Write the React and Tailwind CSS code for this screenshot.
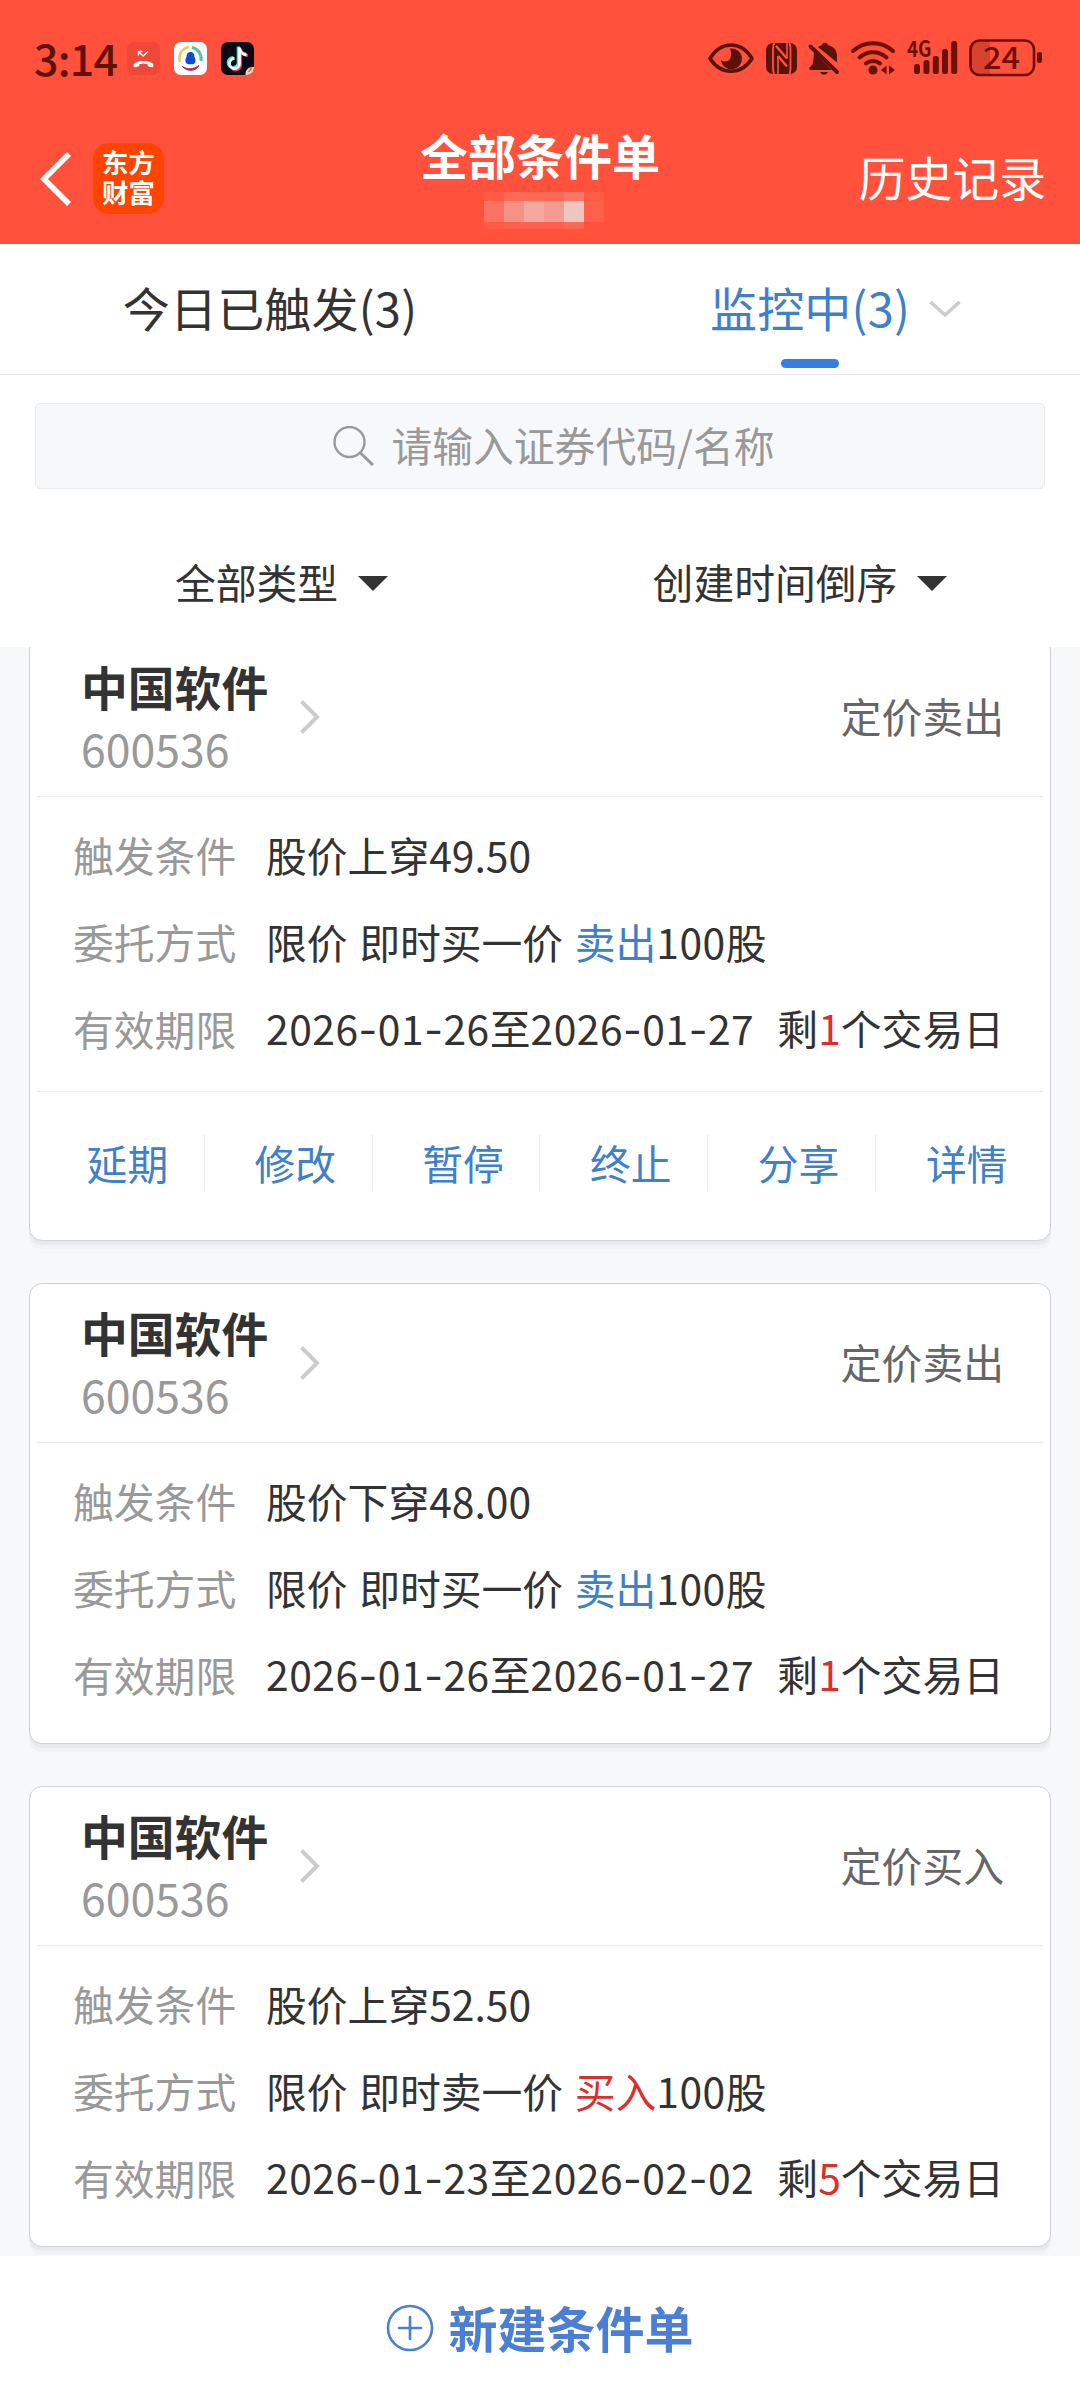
import React from 'react';

const orders = [
    {
        name: '中国软件', code: '600536', type: '定价卖出', trigger: '股价上穿49.50',
        price: '限价 即时买一价', side: '卖出', amount: '100股',
        from: '2026-01-26', to: '2026-01-27', left: '1', open: true,
    },
    {
        name: '中国软件', code: '600536', type: '定价卖出', trigger: '股价下穿48.00',
        price: '限价 即时买一价', side: '卖出', amount: '100股',
        from: '2026-01-26', to: '2026-01-27', left: '1',
    },
    {
        name: '中国软件', code: '600536', type: '定价买入', trigger: '股价上穿52.50',
        price: '限价 即时卖一价', side: '买入', amount: '100股',
        from: '2026-01-23', to: '2026-02-02', left: '5',
    },
];

const actions = ['延期', '修改', '暂停', '终止', '分享', '详情'];

const MissedCallIcon = () => (
    <svg width="33" height="33" viewBox="0 0 33 33" className="shrink-0">
        <rect width="33" height="33" rx="7" fill="#ee4838" />
        <path d="M6.500 23.500c0-6 20-6 20 0 0 1.500-.8 2-2 1.700l-2.800-.6c-1-.3-1.200-.8-1.200-2.600-2.600-.8-5.400-.8-8 0 0 1.800-.2 2.300-1.200 2.600l-2.800.6c-1.200.3-2-.2-2-1.700z" fill="#fff" />
        <path d="M11.500 13.500V9.500H15.500M11.500 9.500L16 14l5-4.500" fill="none" stroke="#fff" strokeWidth="1.300" />
    </svg>
);

const PenguinIcon = () => (
    <svg width="33" height="33" viewBox="0 0 33 33" className="shrink-0">
        <rect width="33" height="33" rx="7" fill="#fff" />
        <path d="M6 20C4 12 8 6.500 15 5" fill="none" stroke="#e6cf62" strokeWidth="2.600" />
        <path d="M18 5.500c6 1 10 7 9 13.500" fill="none" stroke="#5bc4ae" strokeWidth="3.200" />
        <path d="M8.500 24.500c5 3.500 11 3 16.500-1-3 6-12 6.500-16.500 1z" fill="#c2195f" stroke="#c2195f" strokeWidth="1" />
        <path d="M16.500 10c3 0 4 2.500 4 5 1.200 2 1.500 4 .8 5-.6 2-2.500 2.300-4.800 2.300s-4.200-.3-4.800-2.300c-.7-1-.4-3 .8-5 0-2.500 1-5 4-5z" fill="#0b4fd0" />
    </svg>
);

const NoteIcon = () => (
    <svg width="33" height="33" viewBox="0 0 33 33" className="shrink-0">
        <rect width="33" height="33" rx="7" fill="#0a0a14" />
        <g fill="none" strokeWidth="3.200">
            <path d="M17.300 4.500v16.500a5 5 0 1 1-5-5.500M17.300 5.500c.8 4 3.500 6 7.500 6.500" stroke="#35e6e0" />
            <path d="M19.500 6.500V23a5 5 0 0 1-9 2.500M19.500 7c.8 4 3.500 6 7.500 6.500" stroke="#f0325a" />
            <path d="M18.500 5.500V22a5 5 0 1 1-5-5.500M18.500 6.500c.8 4 3.500 6 7 6.500" stroke="#fff" strokeWidth="2.800" />
        </g>
        <path d="M33 25v1a7 7 0 0 1-7 7h-1.500c-.5-5 3-8.500 8.500-8z" fill="#ffc9ae" />
        <path d="M28 30l1.500-3M29 27h2" stroke="#c0392b" strokeWidth="1" />
    </svg>
);

const StatusIcons = () => (
    <svg width="342" height="84" viewBox="704 16 342 84" className="shrink-0">
        <path d="M710 58.500c11-18 31-18 42 0-11 17-31 17-42 0z" fill="none" stroke="#5a120c" strokeWidth="3.600" strokeLinejoin="round" />
        <path d="M730 48.500a10.500 10.500 0 1 1-9 11.500c3 2.500 8 2 9.500-2 1.200-3.500.5-6.500-.5-9.500z" fill="#5a120c" />
        <rect x="766" y="43" width="31" height="31" rx="7" fill="#5a120c" />
        <g fill="none" stroke="#ff513b">
            <path d="M774.500 43c-1.500 2-1.500 4-1.500 7v17c0 3 .3 5 1 7M789.500 74c1-2 1-4 1-7V50c0-3-.3-5-1-7" strokeWidth="1.800" />
            <path d="M776 46l11 12.500M778 56l9 10.500" strokeWidth="2.400" />
            <path d="M778 56v18M787 43v15.500" strokeWidth="1.600" />
        </g>
        <path d="M818 47c1.500-1 3-1.500 4-2 1-3 5-3 6 0 6 1.500 9 6 9 11v6.500zM814 52l17.500 18H810c-1.500-1.500-.5-3 1.500-4.500 1.800-2 2-5.500 2.500-13.500zM820 72h8c-1.500 3.500-6.500 3.500-8 0z" fill="#5a120c" />
        <path d="M810.500 46.500L837 72" stroke="#5a120c" strokeWidth="4" strokeLinecap="round" />
        <g fill="none" stroke="#6d1108" strokeWidth="4" strokeLinecap="round">
            <path d="M853 51c11-10.500 29-10.500 40 0" />
            <path d="M859.500 57.500c8-7 19-7 27 0" />
            <path d="M866 63.500c4-3.500 10-3.500 14 0" />
        </g>
        <circle cx="873" cy="70" r="4.600" fill="#6d1108" />
        <path d="M886.500 65.500v9l-5.500-4.500zM889 65.500v9l6-4.500z" fill="#6d1108" />
        <text x="907" y="57" fontSize="22" fontWeight="700" textLength="24.500" lengthAdjust="spacingAndGlyphs" fill="#6d1108">4G</text>
        <g fill="#6d1108">
            <rect x="914" y="64" width="6" height="10" rx="2.500" />
            <rect x="923.500" y="60" width="6" height="14" rx="2.500" />
            <rect x="932.800" y="56" width="6" height="18" rx="2.500" />
            <rect x="942" y="49" width="6" height="25" rx="2.500" />
            <rect x="951.200" y="41" width="6" height="33" rx="2.500" />
        </g>
        <path d="M990 41h-11a8 8 0 0 0-8 8v17a8 8 0 0 0 8 8h11z" fill="#d8432f" />
        <rect x="970.500" y="40.500" width="63.500" height="34.500" rx="9" fill="none" stroke="#6d1108" strokeWidth="2.600" />
        <rect x="1037" y="52" width="5" height="11" rx="2" fill="#6d1108" />
        <text x="1001.500" y="69" fontSize="31" fontWeight="500" textAnchor="middle" textLength="37" lengthAdjust="spacingAndGlyphs" fill="#6d1108">24</text>
    </svg>
);

// Hyphens in the dates use a wider face than the digits
const DateText = ({ value }) => (
    <span className="tracking-[0.5px]">
        {value.split('-').map((part, i) => (
            <React.Fragment key={i}>
                {i > 0 && <span className="font-[Inter]">-</span>}
                {part}
            </React.Fragment>
        ))}
    </span>
);

const Row = ({ label, children }) => (
    <div className="flex h-[87px] items-center">
        <span className="w-[193px] shrink-0 text-[#999]">{label}</span>
        <div className="flex flex-1 whitespace-pre text-[#333] [word-spacing:2.400px]">{children}</div>
    </div>
);

const OrderCard = ({ order }) => (
    <div className="shrink-0 rounded-[13px] border border-[#cfd1d4] bg-white px-[7px] text-[40.800px] leading-[60px] shadow-[0_4px_0_#e8eaec,0_8px_0_#f1f2f4]">
        <div className="flex h-[159px] items-center border-b border-[#ebebeb] pl-[44px] pr-[39px]">
            <div className="w-[219px]">
                <div className="text-[46.800px] font-bold leading-[62px] text-[#333]">{order.name}</div>
                <div className="text-[44.600px] leading-[62px] text-[#999]">{order.code}</div>
            </div>
            <svg width="20" height="34" viewBox="0 0 20 34" fill="none" stroke="#ccc" strokeWidth="4">
                <path d="M1.500 1.500L17 17L1.500 32.500" />
            </svg>
            <span className="ml-auto pb-[2px] text-[#666]">{order.type}</span>
        </div>
        <div className={order.open ? 'h-[294px] pl-[36px] pr-[39px] pt-[14px]' : 'h-[300px] pl-[36px] pr-[39px] pt-[14px]'}>
            <Row label="触发条件">{order.trigger}</Row>
            <Row label="委托方式">
                {order.price}{' '}
                <span className={order.side === '卖出' ? 'text-[#3f80cb]' : 'text-[#d93030]'}>{order.side}</span>
                <span className="tracking-[0.5px]">{order.amount}</span>
            </Row>
            <Row label="有效期限">
                <DateText value={order.from} />至<DateText value={order.to} />
                <span className="ml-auto">剩<span className="text-[#d93030]">{order.left}</span>个交易日</span>
            </Row>
        </div>
        {order.open && (
            <div className="flex h-[149px] items-center border-t border-[#ebebeb] pb-[7px]">
                {actions.map((action) => (
                    <div key={action} className="flex h-[56px] w-[167.800px] shrink-0 items-center justify-center border-r border-[#ebebeb] pl-[14px] text-[#3f80cb] last:border-r-0">
                        {action}
                    </div>
                ))}
            </div>
        )}
    </div>
);

const Triangle = () => (
    <svg width="30" height="15" viewBox="0 0 30 15" className="mt-[3px]">
        <path d="M0 0H30L15 15z" fill="#333" />
    </svg>
);

const App = () => {
    return (
        <div className="flex h-[2400px] w-[1080px] flex-col overflow-hidden bg-[#f7f8fa] font-['Noto_Sans_CJK_SC',sans-serif]">
            <header className="h-[244px] shrink-0 bg-[#ff513b]">
                <div className="flex h-[116px] items-center px-[34px]">
                    <span className="w-[93px] pb-[3px] text-[43px] font-medium leading-[50px] tracking-[-0.8px] text-[#5f1209]">3:14</span>
                    <div className="flex gap-[14px]">
                        <MissedCallIcon />
                        <PenguinIcon />
                        <NoteIcon />
                    </div>
                    <div className="ml-auto"><StatusIcons /></div>
                </div>
                <div className="flex h-[128px] items-start text-white">
                    <div className="flex w-[360px] items-center pl-[40px] pt-[27px]">
                        <svg width="32" height="54" viewBox="0 0 32 54" fill="none" stroke="#fff" strokeWidth="5.500">
                            <path d="M29 2L4 27L29 52" />
                        </svg>
                        <div className="ml-[21px] flex h-[71px] w-[71px] items-center justify-center rounded-[16px] bg-[#ff4400] pb-[3px]">
                            <span className="w-[53px] break-all text-[26.400px] font-bold leading-[30px]">东方财富</span>
                        </div>
                    </div>
                    <div className="flex w-[360px] flex-col items-center pt-[8px]">
                        <h1 className="text-[48px] font-bold leading-[60px]">全部条件单</h1>
                        <div className="ml-[8px] mt-[8px] grid w-[120px] grid-cols-6 grid-rows-[9px_21px_7px]">
                            <span className="bg-[#ff5a45]" /><span className="bg-[#ff6a57]" /><span className="bg-[#ff6a57]" /><span className="bg-[#ff6855]" /><span className="bg-[#fd7565]" /><span className="bg-[#ff5c47]" />
                            <span className="bg-[#fb7162]" /><span className="bg-[#f59285]" /><span className="bg-[#f4a99f]" /><span className="bg-[#f49c91]" /><span className="bg-[#efc5c0]" /><span className="bg-[#ff604c]" />
                            <span className="bg-[#ff5a45]" /><span className="bg-[#ff604c]" /><span className="bg-[#ff614d]" /><span className="bg-[#ff614d]" /><span className="bg-[#fd6855]" />
                        </div>
                    </div>
                    <div className="w-[360px] pr-[34px] pt-[29px] text-right text-[46.800px] leading-[62px]">历史记录</div>
                </div>
            </header>

            <nav className="flex h-[131px] shrink-0 border-b border-[#e8e8e8] bg-white text-[47px]">
                <div className="flex w-1/2 items-center justify-center pb-[3px] tracking-[0.200px] text-[#333]">今日已触发(3)</div>
                <div className="relative flex w-1/2 items-center justify-center pb-[3px] tracking-[0.200px] text-[#3f80cb]">
                    监控中(3)
                    <svg className="absolute left-[389px] top-[56px]" width="32" height="18" viewBox="0 0 32 18" fill="none" stroke="#ccc" strokeWidth="3.500">
                        <path d="M1.500 2L16 15L30.500 2" />
                    </svg>
                    <span className="absolute bottom-[6px] left-[241px] h-[9px] w-[58px] rounded-full bg-[#367fe0]" />
                </div>
            </nav>

            <div className="shrink-0 bg-white px-[35px] pt-[28px]">
                <div className="flex h-[86px] items-center justify-center gap-[17px] rounded-[5px] border border-[#ebebeb] bg-[#f7f8fa] pl-[28px] text-[40.800px] text-[#999]">
                    <svg width="41" height="40" viewBox="0 0 41 40" fill="none" stroke="#999" strokeWidth="2.400">
                        <circle cx="16.500" cy="16" r="15" />
                        <path d="M27 26.500L40 39" strokeWidth="3" />
                    </svg>
                    <span className="pb-[3px]">请输入证券代码/名称</span>
                </div>
            </div>

            <div className="flex h-[158px] shrink-0 items-center bg-white pt-[28px] text-[40.800px] text-[#333]">
                <div className="flex w-1/2 items-center justify-center gap-[20px] pl-[23px]">全部类型<Triangle /></div>
                <div className="flex w-1/2 items-center justify-center gap-[20px] pr-[20px]">创建时间倒序<Triangle /></div>
            </div>

            <main className="h-[1609px] shrink-0 overflow-hidden px-[29px]">
                <div className="-mt-[10px] flex flex-col gap-[42px]">
                    {orders.map((order, i) => <OrderCard key={i} order={order} />)}
                </div>
            </main>

            <footer className="flex h-[144px] shrink-0 items-center justify-center gap-[14px] bg-white text-[49px] font-bold text-[#4a7fd4]">
                <svg width="48" height="48" viewBox="0 0 48 48" fill="none" stroke="#4a7fd4" strokeWidth="2.600" strokeLinecap="round">
                    <circle cx="24" cy="24" r="22" />
                    <path d="M24 13V35M13 24H35" />
                </svg>
                <span className="pb-[3px]">新建条件单</span>
            </footer>
        </div>
    );
};

export default App;
